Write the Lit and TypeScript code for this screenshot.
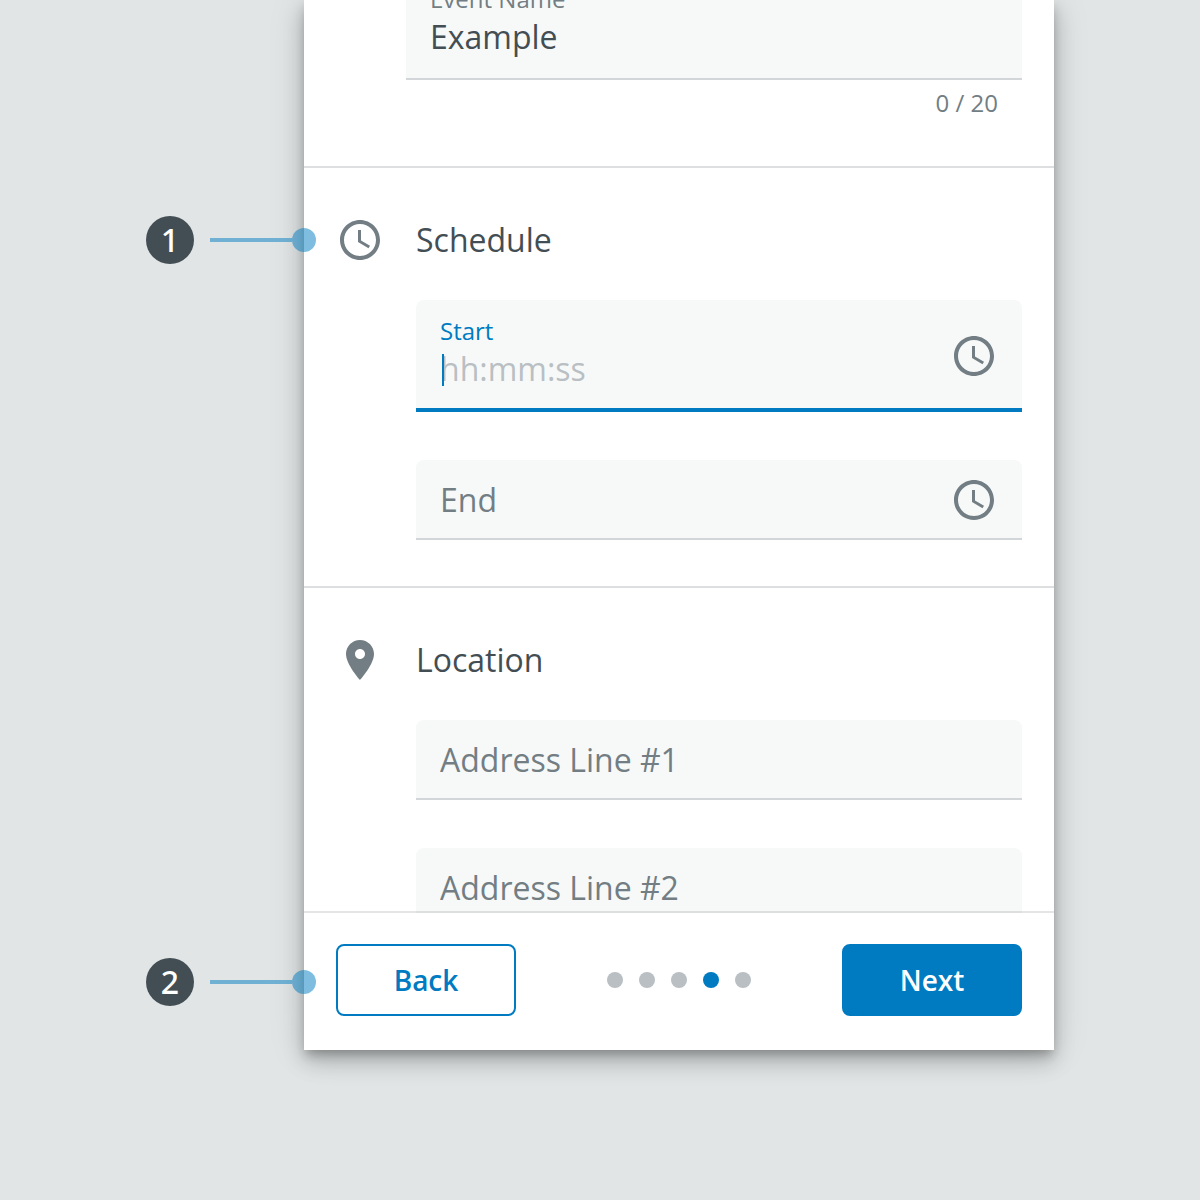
import { LitElement, html, css, svg, nothing } from "lit";
import { customElement, property } from "lit/decorators.js";
import { classMap } from "lit/directives/class-map.js";

const clockIcon = svg`
  <path d="M11.99 2C6.47 2 2 6.48 2 12s4.47 10 9.99 10C17.52 22 22 17.52 22 12S17.52 2 11.99 2zM12 20c-4.42 0-8-3.58-8-8s3.58-8 8-8 8 3.58 8 8-3.58 8-8 8z"/>
  <path d="M12.5 7H11v6l5.25 3.15.75-1.23-4.5-2.67z"/>`;

const placeIcon = svg`
  <path d="M12 2C8.13 2 5 5.13 5 9c0 5.25 7 13 7 13s7-7.75 7-13c0-3.87-3.13-7-7-7zm0 9.5c-1.38 0-2.5-1.12-2.5-2.5s1.12-2.5 2.5-2.5 2.5 1.12 2.5 2.5-1.12 2.5-2.5 2.5z"/>`;

const icon = (shape: unknown) =>
  html`<svg class="icon" viewBox="0 0 24 24" aria-hidden="true">${shape}</svg>`;

@customElement("form-field")
class FormField extends LitElement {
  @property() label = "";
  @property() value = "";
  @property() hint = "";
  @property({ type: Boolean }) floating = false;
  @property({ type: Boolean }) active = false;
  @property({ type: Boolean }) time = false;

  static styles = css`
    :host {
      display: block;
    }
    .field {
      display: flex;
      align-items: center;
      gap: 16px;
      box-sizing: border-box;
      height: 80px;
      padding: 0 24px;
      background: #f7f9f8;
      box-shadow: inset 0 -2px 0 #d3d6d9;
      border-radius: 8px 8px 0 0;
    }
    .floating {
      height: 112px;
    }
    .active {
      box-shadow: inset 0 -4px 0 #007bc1;
    }
    .text {
      display: flex;
      flex-direction: column;
      flex: 1;
      min-width: 0;
      position: relative;
    }
    .floating .text {
      gap: 2px;
      padding-bottom: 8px;
    }
    .label {
      font-size: 24px;
      line-height: 32px;
      color: #727e84;
    }
    .active .label {
      color: #007bc1;
    }
    .input {
      width: 100%;
      height: 40px;
      padding: 0;
      border: 0;
      outline: 0;
      background: none;
      font: inherit;
      font-size: 32px;
      line-height: 40px;
      color: #434e54;
      caret-color: #007bc1;
    }
    .input::placeholder {
      color: #727e84;
      opacity: 1;
    }
    .floating .input::placeholder {
      color: #b9bfc3;
    }
    .caret {
      position: absolute;
      left: 2px;
      bottom: 11px;
      width: 2px;
      height: 32px;
      background: #007bc1;
    }
    .icon {
      width: 48px;
      height: 48px;
      fill: #727e84;
      flex: none;
    }
  `;

  render() {
    return html`
      <div class=${classMap({ field: true, floating: this.floating, active: this.active })}>
        <div class="text">
          ${this.floating ? html`<label class="label" for="input">${this.label}</label>` : nothing}
          <input
            class="input"
            id="input"
            type="text"
            .value=${this.value}
            placeholder=${this.floating ? this.hint : this.label}
            aria-label=${this.label}
          />
          ${this.active ? html`<span class="caret"></span>` : nothing}
        </div>
        ${this.time ? icon(clockIcon) : nothing}
      </div>
    `;
  }
}

@customElement("app-root")
class AppRoot extends LitElement {
  static styles = css`
    :host {
      display: block;
      font-family: "Open Sans", "Noto Sans", sans-serif;
      color: #434e54;
    }
    .stage {
      position: relative;
      display: flex;
      box-sizing: border-box;
      height: 100vh;
      padding: 0 146px 150px 304px;
      background: #e1e5e5;
      overflow: hidden;
    }
    .card {
      display: flex;
      flex-direction: column;
      flex: 1;
      min-width: 0;
      background: #fff;
      box-shadow:
        0 6px 10px -2px rgba(0, 0, 0, 0.25),
        0 12px 20px 0 rgba(0, 0, 0, 0.18),
        0 2px 36px 0 rgba(0, 0, 0, 0.12);
    }
    .scroller {
      flex: 1;
      min-height: 0;
      overflow: hidden;
    }
    .section {
      padding: 48px 32px 46px;
      border-bottom: 2px solid #dedfe0;
    }
    .section.scrolled {
      margin-top: -32px;
      padding-top: 0;
    }
    .heading {
      display: flex;
      align-items: center;
      gap: 32px;
      margin: 0 0 36px;
      font-size: 32px;
      line-height: 48px;
      font-weight: 400;
    }
    .icon {
      width: 48px;
      height: 48px;
      fill: #727e84;
    }
    .fields {
      display: grid;
      gap: 48px;
      padding-left: 80px;
    }
    .scrolled .fields {
      gap: 8px;
      padding-left: 70px;
    }
    .count {
      padding: 0 24px 2px;
      font-size: 24px;
      line-height: 30px;
      text-align: right;
      color: #727e84;
    }
    .footer {
      position: relative;
      display: flex;
      align-items: center;
      justify-content: space-between;
      padding: 31px 32px 34px;
      background: #fff;
      box-shadow: 0 -2px 0 rgba(0, 0, 0, 0.1);
    }
    .button {
      box-sizing: border-box;
      width: 180px;
      height: 72px;
      padding: 0;
      border: 2px solid #007bc1;
      border-radius: 8px;
      background: #fff;
      color: #007bc1;
      font: inherit;
      font-size: 28px;
      font-weight: 600;
      line-height: 40px;
    }
    .primary {
      background: #007bc1;
      color: #fff;
    }
    .dots {
      display: flex;
      gap: 16px;
    }
    .dot {
      width: 16px;
      height: 16px;
      border-radius: 50%;
      background: #b9bfc3;
    }
    .dot.current {
      background: #007bc1;
    }
    .callout {
      position: absolute;
      left: 146px;
      display: flex;
      align-items: center;
    }
    .schedule {
      top: 216px;
    }
    .actions {
      bottom: 194px;
    }
    .number {
      width: 48px;
      height: 48px;
      margin-right: 16px;
      border-radius: 50%;
      background: #434e54;
      color: #fff;
      font-family: "Noto Sans", "Open Sans", sans-serif;
      font-size: 32px;
      font-weight: 500;
      line-height: 48px;
      text-align: center;
    }
    .line {
      width: 82px;
      height: 4px;
      background: rgba(0, 123, 193, 0.5);
    }
    .knob {
      width: 24px;
      height: 24px;
      border-radius: 50%;
      background: rgba(0, 123, 193, 0.5);
    }
  `;

  render() {
    return html`
      <main class="stage">
        <form class="card">
          <div class="scroller">
            <section class="section scrolled">
              <div class="fields">
                <form-field label="Event Name" value="Example" floating></form-field>
                <div class="count">0 / 20</div>
              </div>
            </section>
            <section class="section">
              <h2 class="heading">${icon(clockIcon)}Schedule</h2>
              <div class="fields">
                <form-field label="Start" hint="hh:mm:ss" floating active time></form-field>
                <form-field label="End" time></form-field>
              </div>
            </section>
            <section class="section">
              <h2 class="heading">${icon(placeIcon)}Location</h2>
              <div class="fields">
                <form-field label="Address Line #1"></form-field>
                <form-field label="Address Line #2"></form-field>
              </div>
            </section>
          </div>
          <footer class="footer">
            <button class="button" type="button">Back</button>
            <div class="dots">
              ${[0, 1, 2, 3, 4].map(
                (step) => html`<span class=${classMap({ dot: true, current: step === 3 })}></span>`
              )}
            </div>
            <button class="button primary" type="button">Next</button>
          </footer>
        </form>
        ${["schedule", "actions"].map(
          (target, index) => html`
            <div class="callout ${target}">
              <span class="number">${index + 1}</span>
              <span class="line"></span>
              <span class="knob"></span>
            </div>
          `
        )}
      </main>
    `;
  }
}
